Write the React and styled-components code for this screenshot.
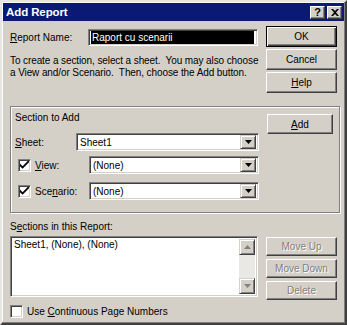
import React from "react";
import styled, { createGlobalStyle } from "styled-components";

const Global = createGlobalStyle`
  html, body { margin: 0; padding: 0; background: #d4d0c8; }
  * { box-sizing: border-box; }
`;

const FONT = `"Liberation Sans", Arial, sans-serif`;

const Window = styled.div`
  width: 347px;
  height: 325px;
  background: #d4d0c8;
  border: 2px solid;
  border-color: #e8e6e0 #404040 #404040 #e8e6e0;
  box-shadow: inset -1px -1px 0 #808080, inset 1px 1px 0 #ffffff;
  padding: 1px;
  font-family: ${FONT};
  font-size: 10px;
  color: #000;
  display: flex;
  flex-direction: column;
`;

const TitleBar = styled.div`
  height: 18px;
  background: #0a1a74;
  display: flex;
  align-items: center;
  justify-content: space-between;
  padding: 0 2px 0 3px;
`;

const Title = styled.span`
  color: #fff;
  font-weight: bold;
  font-size: 11.5px;
  letter-spacing: -0.1px;
`;

const TitleButtons = styled.div`
  display: flex;
  gap: 2px;
`;

const TitleButton = styled.div`
  width: 15px;
  height: 13px;
  background: #d4d0c8;
  border: 1px solid;
  border-color: #fff #404040 #404040 #fff;
  box-shadow: inset -1px -1px 0 #808080;
  font-weight: bold;
  font-size: 11px;
  line-height: 11px;
  text-align: center;
  color: #000;
  display: flex;
  align-items: center;
  justify-content: center;
`;

const Body = styled.div`
  flex: 1;
  padding: 5px 6px 0 7px;
  display: flex;
  flex-direction: column;
`;

const TopGrid = styled.div`
  display: flex;
  gap: 8px;
`;

const LeftCol = styled.div`
  width: 248px;
  display: flex;
  flex-direction: column;
`;

const RightCol = styled.div`
  display: flex;
  flex-direction: column;
  gap: 2px;
`;

const NameRow = styled.div`
  display: flex;
  align-items: center;
  margin-top: 3px;
  height: 16px;
`;

const Label = styled.span`
  width: ${(p) => p.$w || "auto"};
  flex-shrink: 0;
  white-space: nowrap;
`;

const Sunken = styled.div`
  border: 1px solid;
  border-color: #808080 #ffffff #ffffff #808080;
  box-shadow: inset 1px 1px 0 #404040, inset -1px -1px 0 #d4d0c8;
  background: #fff;
`;

const TextField = styled(Sunken)`
  width: 170px;
  height: 17px;
  padding: 2px 3px;
  display: flex;
  align-items: center;
`;

const Selected = styled.span`
  background: #000;
  color: #fff;
  flex: 1;
  height: 13px;
  line-height: 13px;
  padding-left: 1px;
  margin-left: -1px;
`;

const Desc = styled.p`
  margin: 10px 0 0 0;
  line-height: 12px;
  white-space: nowrap;
  letter-spacing: -0.1px;
`;

const Button = styled.div`
  width: ${(p) => p.$w || 71}px;
  height: ${(p) => p.$h || 21}px;
  margin-top: ${(p) => p.$mt || 0}px;
  background: #d4d0c8;
  border: 1px solid;
  border-color: ${(p) => (p.$default ? "#000" : "#fff #404040 #404040 #fff")};
  box-shadow: ${(p) =>
    p.$default
      ? "inset 1px 1px 0 #fff, inset -1px -1px 0 #404040, inset -2px -2px 0 #808080"
      : "inset -1px -1px 0 #808080"};
  display: flex;
  align-items: center;
  justify-content: center;
  color: ${(p) => (p.$disabled ? "#808080" : "#000")};
  text-shadow: ${(p) => (p.$disabled ? "1px 1px 0 #fff" : "none")};
  flex-shrink: 0;
`;

const U = styled.span`
  text-decoration: underline;
`;

const GroupBox = styled.div`
  margin-top: 13px;
  width: 330px;
  height: 107px;
  border: 1px solid #808080;
  box-shadow: 1px 1px 0 #fff, inset 1px 1px 0 #fff;
  padding: 4px 5px 0 4px;
  display: flex;
  gap: 8px;
`;

const GroupLeft = styled.div`
  width: 244px;
  display: flex;
  flex-direction: column;
`;

const GroupTitle = styled.div`
  line-height: 12px;
  height: 12px;
  margin-top: 1px;
`;

const FieldRow = styled.div`
  display: flex;
  align-items: center;
  height: 18px;
  margin-top: ${(p) => p.$mt}px;
  padding-left: ${(p) => p.$pl || 0}px;
`;

const Combo = styled(Sunken)`
  width: ${(p) => p.$w}px;
  height: 18px;
  display: flex;
  align-items: center;
  padding: 2px;
  margin-left: auto;
`;

const ComboText = styled.span`
  flex: 1;
  padding-left: 1px;
`;

const ArrowButton = styled.div`
  width: 16px;
  height: ${(p) => p.$h || 14}px;
  background: #d4d0c8;
  border: 1px solid;
  border-color: #d4d0c8 #404040 #404040 #d4d0c8;
  box-shadow: inset 1px 1px 0 #fff, inset -1px -1px 0 #808080;
  display: flex;
  align-items: center;
  justify-content: center;
`;

const Check = styled(Sunken)`
  width: 13px;
  height: 13px;
  flex-shrink: 0;
  display: flex;
  align-items: center;
  justify-content: center;
  margin-right: 4px;
`;

const SectionsLabel = styled.div`
  margin-top: 8px;
  line-height: 12px;
`;

const BottomGrid = styled.div`
  display: flex;
  gap: 8px;
  margin-top: 3px;
`;

const ListBox = styled(Sunken)`
  width: 248px;
  height: 61px;
  padding: 2px;
  display: flex;
`;

const ListItems = styled.div`
  flex: 1;
  padding-left: 1px;
  line-height: 12px;
`;

const ScrollBar = styled.div`
  width: 16px;
  display: flex;
  flex-direction: column;
  justify-content: space-between;
  background: #eae8e4;
`;

const BottomButtons = styled.div`
  display: flex;
  flex-direction: column;
  gap: 3px;
  padding-top: 1px;
`;

const CheckRow = styled.div`
  display: flex;
  align-items: center;
  margin-top: 5px;
`;

const CheckMark = () => (
  <svg width="9" height="9" viewBox="0 0 7 7">
    <path d="M0 2 L0 4 L2 6 L7 1 L7 -1 L2 4 Z" fill="#000" />
  </svg>
);

const Tri = ({ up, color = "#000" }) => (
  <svg width="7" height="4" viewBox="0 0 7 4">
    <path d={up ? "M3.5 0 L7 4 L0 4 Z" : "M0 0 L7 0 L3.5 4 Z"} fill={color} />
  </svg>
);

export default function App() {
  return (
    <>
      <Global />
      <Window>
        <TitleBar>
          <Title>Add Report</Title>
          <TitleButtons>
            <TitleButton>?</TitleButton>
            <TitleButton>
              <svg width="8" height="7" viewBox="0 0 8 7">
                <path d="M0 0 L2 0 L4 2 L6 0 L8 0 L5 3.5 L8 7 L6 7 L4 5 L2 7 L0 7 L3 3.5 Z" fill="#000" />
              </svg>
            </TitleButton>
          </TitleButtons>
        </TitleBar>
        <Body>
          <TopGrid>
            <LeftCol>
              <NameRow>
                <Label $w="78px">
                  <U>R</U>eport Name:
                </Label>
                <TextField>
                  <Selected>Raport cu scenarii</Selected>
                </TextField>
              </NameRow>
              <Desc>
                To create a section, select a sheet.&nbsp; You may also choose
                <br />a View and/or Scenario.&nbsp; Then, choose the Add button.
              </Desc>
            </LeftCol>
            <RightCol>
              <Button $default>OK</Button>
              <Button>Cancel</Button>
              <Button>
                <span>
                  <U>H</U>elp
                </span>
              </Button>
            </RightCol>
          </TopGrid>

          <GroupBox>
            <GroupLeft>
              <GroupTitle>Section to Add</GroupTitle>
              <FieldRow $mt={9}>
                <Label>
                  <U>S</U>heet:
                </Label>
                <Combo $w={183}>
                  <ComboText>Sheet1</ComboText>
                  <ArrowButton>
                    <Tri />
                  </ArrowButton>
                </Combo>
              </FieldRow>
              <FieldRow $mt={5} $pl={3}>
                <Check>
                  <CheckMark />
                </Check>
                <Label>
                  <U>V</U>iew:
                </Label>
                <Combo $w={170}>
                  <ComboText>(None)</ComboText>
                  <ArrowButton>
                    <Tri />
                  </ArrowButton>
                </Combo>
              </FieldRow>
              <FieldRow $mt={8} $pl={3}>
                <Check>
                  <CheckMark />
                </Check>
                <Label>
                  Sce<U>n</U>ario:
                </Label>
                <Combo $w={170}>
                  <ComboText>(None)</ComboText>
                  <ArrowButton>
                    <Tri />
                  </ArrowButton>
                </Combo>
              </FieldRow>
            </GroupLeft>
            <Button $w={66} $h={20} $mt={3}>
              <span>
                <U>A</U>dd
              </span>
            </Button>
          </GroupBox>

          <SectionsLabel>
            S<U>e</U>ctions in this Report:
          </SectionsLabel>
          <BottomGrid>
            <ListBox>
              <ListItems>Sheet1, (None), (None)</ListItems>
              <ScrollBar>
                <ArrowButton $h={16}>
                  <Tri up color="#808080" />
                </ArrowButton>
                <ArrowButton $h={16}>
                  <Tri color="#808080" />
                </ArrowButton>
              </ScrollBar>
            </ListBox>
            <BottomButtons>
              <Button $disabled $h={19}>Move Up</Button>
              <Button $disabled $h={19}>Move Down</Button>
              <Button $disabled $h={19}>Delete</Button>
            </BottomButtons>
          </BottomGrid>
          <CheckRow>
            <Check />
            <span>
              Use <U>C</U>ontinuous Page Numbers
            </span>
          </CheckRow>
        </Body>
      </Window>
    </>
  );
}
